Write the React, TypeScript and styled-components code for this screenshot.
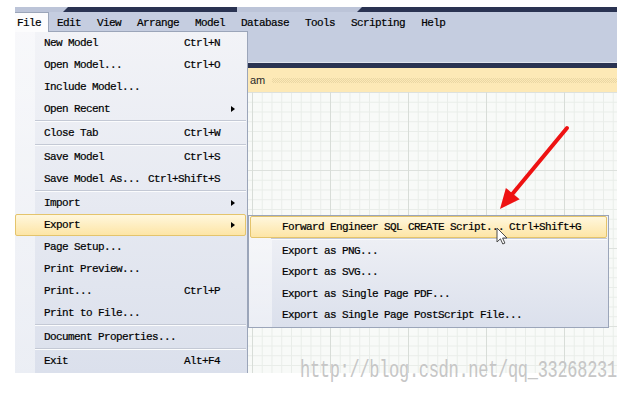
import React from "react";
import styled, { createGlobalStyle, css } from "styled-components";

const MONO = `"Liberation Mono", "DejaVu Sans Mono", monospace`;

const GlobalStyle = createGlobalStyle`
  *, *::before, *::after { box-sizing: border-box; }
  html, body { margin: 0; padding: 0; background: #ffffff; }
  body { width: 632px; height: 393px; overflow: hidden; }
`;

const Page = styled.div`
  position: relative;
  width: 632px;
  height: 393px;
  padding: 7px 15px 0 15px;
  background: #ffffff;
`;

const AppWindow = styled.div`
  position: relative;
  width: 602px;
  height: 366px;
  overflow: hidden;
  display: flex;
  flex-direction: column;
  background: #c5cde0;
`;

const TabStrip = styled.div`
  display: flex;
  height: 5px;
  flex-shrink: 0;
  background: #bcc4d8;
`;

const StripTab = styled.div<{ $dark?: boolean; $grow?: boolean }>`
  flex: ${(p) => (p.$grow ? "1 1 auto" : "0 0 auto")};
  background: ${(p) => (p.$dark ? "#2a3352" : "#bcc4d8")};
  ${(p) =>
    p.$dark &&
    css`
      clip-path: polygon(5px 0, 100% 0, 100% 100%, 0 100%);
    `}
`;

const MenuBar = styled.div`
  display: flex;
  height: 20px;
  flex-shrink: 0;
  background: #c5cde0;
`;

const MenuTitle = styled.div<{ $active?: boolean }>`
  font-family: ${MONO};
  font-size: 11px;
  letter-spacing: -0.6px;
  -webkit-text-stroke: 0.2px #000;
  line-height: 18px;
  height: 20px;
  padding: 2px 8px 0 8px;
  color: #000;
  white-space: nowrap;
  ${(p) =>
    p.$active &&
    css`
      position: relative;
      z-index: 3;
      padding: 2px 8px 0 2px;
      background: #fcfcfd;
      box-shadow: inset -1px 0 #9ba5b9, inset 0 1px #9ba5b9;
    `}
`;

const Toolbar = styled.div`
  height: 31px;
  flex-shrink: 0;
  background: #c5cde0;
  border-bottom: 1px solid #e1e5ef;
`;

const DarkBand = styled.div`
  height: 5px;
  flex-shrink: 0;
  background: #2a3352;
`;

const DocHeader = styled.div`
  display: flex;
  align-items: center;
  height: 24px;
  flex-shrink: 0;
  padding-left: 235px;
  background: #fde9b6;
`;

const HeaderLabel = styled.div`
  width: 12px;
  flex-shrink: 0;
  white-space: nowrap;
  font-family: "Liberation Sans", Arial, sans-serif;
  font-size: 11px;
  color: #2a2a2a;
`;

const HeaderDots = styled.div`
  flex: 1;
  height: 5px;
  margin-left: 10px;
  background: repeating-conic-gradient(#ead7a4 0 25%, transparent 0 50%) 0 0 / 2px 2px;
`;

const Canvas = styled.div`
  flex: 1;
  background-color: #f8faf8;
  background-image: linear-gradient(to right, #d8ddd8 1px, transparent 1px),
    linear-gradient(to bottom, #dde1dd 1px, transparent 1px),
    linear-gradient(to right, #e9ede9 1px, transparent 1px),
    linear-gradient(to bottom, #e9ede9 1px, transparent 1px);
  background-size: 78px 78px, 78px 78px, 9.75px 9.75px, 9.75px 9.75px;
  background-position: 3px 0, 3px 0, 3px 0, 3px 0;
`;

const MenuPanel = styled.div<{ $gutter: number }>`
  position: absolute;
  z-index: 2;
  display: flex;
  flex-direction: column;
  background: linear-gradient(
      to right,
      rgba(255, 255, 255, 0.45) 0 ${(p) => p.$gutter}px,
      transparent ${(p) => p.$gutter}px
    ),
    linear-gradient(to bottom, #f2f3f7, #dbe0ec);
`;

const FileMenu = styled(MenuPanel)`
  left: 0;
  top: 24px;
  width: 233px;
  height: 342px;
  padding-right: 1px;
  border-top: 1px solid #9ba5b9;
  border-right: 1px solid #9ba5b9;
`;

const ExportMenu = styled(MenuPanel)`
  left: 233px;
  top: 208px;
  width: 361px;
  height: 113px;
  padding: 0 1px;
  border: 1px solid #9ba5b9;
`;

const MenuRow = styled.div<{ $active?: boolean; $h: number; $indent: number }>`
  display: flex;
  align-items: center;
  flex-shrink: 0;
  height: ${(p) => p.$h}px;
  padding-left: ${(p) => p.$indent}px;
  border: 1px solid transparent;
  border-radius: 2px;
  font-family: ${MONO};
  font-size: 11px;
  letter-spacing: -0.6px;
  -webkit-text-stroke: 0.2px #000;
  color: #000;
  white-space: nowrap;
  ${(p) =>
    p.$active &&
    css`
      border-color: #e4c46c;
      background: linear-gradient(to bottom, #fff7dd, #fde5a6);
    `}
`;

const RowLabel = styled.span`
  flex: 1;
`;

const RowShortcut = styled.span``;

const ArrowCell = styled.span`
  width: 25px;
  flex-shrink: 0;
  display: flex;
  align-items: center;
`;

const SubArrow = styled.span`
  margin-left: 11px;
  width: 0;
  height: 0;
  border-left: 4px solid #000;
  border-top: 3.5px solid transparent;
  border-bottom: 3.5px solid transparent;
`;

const MenuSeparator = styled.div<{ $indent: number }>`
  flex-shrink: 0;
  height: 2px;
  margin-left: ${(p) => p.$indent}px;
  border-top: 1px solid #c4c9d5;
  border-bottom: 1px solid #fbfcfd;
`;

const Watermark = styled.div`
  position: absolute;
  left: 300px;
  top: 363px;
  line-height: 20px;
  font-family: ${MONO};
  font-size: 17px;
  letter-spacing: -0.3px;
  color: #c6c6c6;
  white-space: nowrap;
  transform: scaleY(1.45);
  transform-origin: 0 14.5px;
  pointer-events: none;
`;

const Overlay = styled.svg`
  position: absolute;
  pointer-events: none;
  overflow: visible;
`;

const RedArrow = styled(Overlay)`
  left: 495px;
  top: 122px;
  z-index: 5;
`;

const Cursor = styled(Overlay)`
  left: 496px;
  top: 227px;
  z-index: 6;
`;

type Entry =
  | { label: string; shortcut?: string; submenu?: boolean; active?: boolean }
  | { separator: true };

const fileEntries: Entry[] = [
  { label: "New Model", shortcut: "Ctrl+N" },
  { label: "Open Model...", shortcut: "Ctrl+O" },
  { label: "Include Model..." },
  { label: "Open Recent", submenu: true },
  { separator: true },
  { label: "Close Tab", shortcut: "Ctrl+W" },
  { separator: true },
  { label: "Save Model", shortcut: "Ctrl+S" },
  { label: "Save Model As...", shortcut: "Ctrl+Shift+S" },
  { separator: true },
  { label: "Import", submenu: true },
  { label: "Export", submenu: true, active: true },
  { label: "Page Setup..." },
  { label: "Print Preview..." },
  { label: "Print...", shortcut: "Ctrl+P" },
  { label: "Print to File..." },
  { separator: true },
  { label: "Document Properties..." },
  { separator: true },
  { label: "Exit", shortcut: "Alt+F4" },
];

const exportEntries: Entry[] = [
  { label: "Forward Engineer SQL CREATE Script...", shortcut: "Ctrl+Shift+G", active: true },
  { separator: true },
  { label: "Export as PNG..." },
  { label: "Export as SVG..." },
  { label: "Export as Single Page PDF..." },
  { label: "Export as Single Page PostScript File..." },
];

const menuTitles = ["File", "Edit", "View", "Arrange", "Model", "Database", "Tools", "Scripting", "Help"];

function renderEntries(entries: Entry[], indent: number, sepIndent: number, rowH: (i: number) => number) {
  return entries.map((e, i) => {
    if ("separator" in e) return <MenuSeparator key={i} $indent={sepIndent} />;
    return (
      <MenuRow key={i} $active={e.active} $h={rowH(i)} $indent={indent}>
        <RowLabel>{e.label}</RowLabel>
        {e.shortcut && <RowShortcut>{e.shortcut}</RowShortcut>}
        <ArrowCell>{e.submenu && <SubArrow />}</ArrowCell>
      </MenuRow>
    );
  });
}

export default function App() {
  return (
    <>
      <GlobalStyle />
      <Page>
        <AppWindow>
          <TabStrip>
            <StripTab style={{ width: 48 }} />
            <StripTab $dark style={{ width: 174 }} />
            <StripTab style={{ width: 120 }} />
            <StripTab $dark $grow />
          </TabStrip>
          <MenuBar>
            {menuTitles.map((t, i) => (
              <MenuTitle key={t} $active={i === 0}>
                {t}
              </MenuTitle>
            ))}
          </MenuBar>
          <Toolbar />
          <DarkBand />
          <DocHeader>
            <HeaderLabel>am</HeaderLabel>
            <HeaderDots />
          </DocHeader>
          <Canvas />

          <FileMenu $gutter={20}>{renderEntries(fileEntries, 28, 20, () => 22)}</FileMenu>
          <ExportMenu $gutter={23}>
            {renderEntries(exportEntries, 31, 21, (i) => (i === 0 ? 22 : 21.5))}
          </ExportMenu>
        </AppWindow>

        <RedArrow width="78" height="92" viewBox="0 0 78 92">
          <line x1="72" y1="6" x2="16.5" y2="73" stroke="#ee1212" strokeWidth="4" strokeLinecap="round" />
          <polygon points="5,87 10.9,65.9 24.7,77.3" fill="#ee1212" />
        </RedArrow>

        <Cursor width="12" height="18" viewBox="0 0 12 18">
          <path
            d="M1 1 L1 15 L4.4 11.8 L6.8 17 L8.9 16.1 L6.6 11 L11 11 Z"
            fill="#ffffff"
            stroke="#4a4a4a"
            strokeWidth="1"
            strokeLinejoin="round"
          />
        </Cursor>

        <Watermark>http://blog.csdn.net/qq_33268231</Watermark>
      </Page>
    </>
  );
}
